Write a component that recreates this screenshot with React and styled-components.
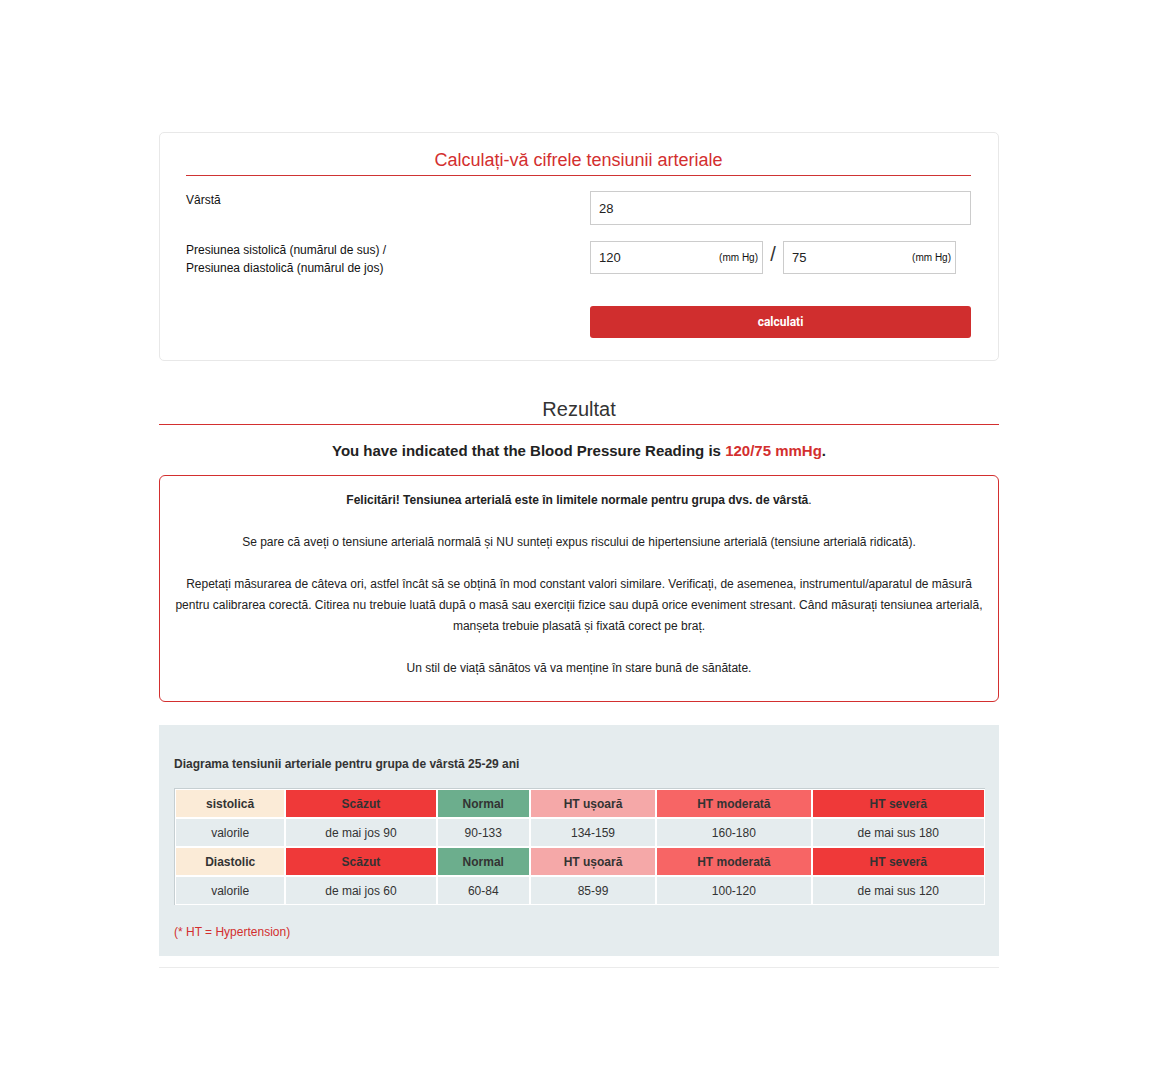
import React from "react";
import styled, { createGlobalStyle } from "styled-components";

const GlobalStyle = createGlobalStyle`
  body {
    margin: 0;
    background: #fff;
    font-family: "Liberation Sans", Arial, sans-serif;
    color: #333;
  }
`;

const Page = styled.div`
  padding: 132px 0 120px 4px;
`;

const Wrapper = styled.div`
  width: 840px;
  margin: 0 auto;
`;

const Card = styled.section`
  border: 1px solid #e8e8e8;
  border-radius: 5px;
  padding: 17px 27px 22px 26px;
`;

const CardTitle = styled.h2`
  margin: 0 0 15px;
  padding-bottom: 4px;
  border-bottom: 1px solid #cf3434;
  color: #d32f2f;
  font-size: 18px;
  font-weight: normal;
  line-height: 21px;
  text-align: center;
`;

const FormRow = styled.div`
  display: grid;
  grid-template-columns: 1fr 381px;
  align-items: start;
  margin-bottom: ${(p) => p.gap ?? 16}px;
`;

const Label = styled.label`
  font-size: 12px;
  line-height: 18px;
  color: #111;
`;

const TextInput = styled.div`
  box-sizing: border-box;
  height: ${(p) => p.h || 34}px;
  width: ${(p) => p.w || "100%"};
  border: 1px solid #cccccc;
  display: flex;
  align-items: center;
  justify-content: space-between;
  padding: 0 4px 0 8px;
  font-size: 13px;
  color: #222;
  background: #fff;
`;

const Unit = styled.span`
  font-size: 10px;
  color: #111;
`;

const PairRow = styled.div`
  display: flex;
  align-items: center;
`;

const Slash = styled.span`
  width: 20px;
  text-align: center;
  font-size: 20px;
  color: #333;
  margin-top: -6px;
`;

const Button = styled.button`
  width: 100%;
  height: 32px;
  border: none;
  border-radius: 3px;
  background: #d02e2e;
  color: #fff;
  font-family: Roboto, "Liberation Sans", sans-serif;
  font-weight: bold;
  font-size: 12px;
  cursor: pointer;
`;

const ResultTitle = styled.h2`
  margin: 36px 0 0;
  padding-bottom: 3px;
  border-bottom: 1px solid #d32f2f;
  text-align: center;
  font-size: 20px;
  font-weight: normal;
  line-height: 24px;
  color: #333;
`;

const Reading = styled.p`
  margin: 16px 0 14px;
  text-align: center;
  font-size: 15px;
  font-weight: bold;
  line-height: 20px;
  color: #222;
`;

const Red = styled.span`
  color: #d32f2f;
`;

const Alert = styled.div`
  border: 1px solid #d32f2f;
  border-radius: 6px;
  padding: 14px 15px 1px;
  text-align: center;
  font-size: 12px;
  line-height: 21px;
  color: #222;
`;

const Para = styled.p`
  margin: 0 0 21px;
`;

const Chart = styled.section`
  margin-top: 23px;
  background: #e5ecee;
  padding: 30px 15px 15px;
`;

const ChartTitle = styled.h3`
  margin: 0 0 15px;
  font-size: 12px;
  line-height: 18px;
  font-weight: bold;
  color: #333;
`;

const Table = styled.table`
  width: 811px;
  border-collapse: separate;
  border-spacing: 0;
  background: #fff;
  border-top: 1px solid #c6cfd2;
  border-left: 1px solid #c6cfd2;
  table-layout: fixed;
`;

const Cell = styled.td`
  border: 1px solid #fff;
  height: 29px;
  padding: 0 4px;
  box-sizing: border-box;
  text-align: center;
  font-size: 12px;
  font-weight: ${(p) => (p.head ? "bold" : "normal")};
  color: #333;
  background: ${(p) => p.bg || "#e5ecee"};
`;

const Note = styled.p`
  margin: 18px 0 0;
  font-size: 12px;
  line-height: 18px;
  color: #d32f2f;
`;

const Divider = styled.hr`
  margin: 11px 0 0;
  border: none;
  border-top: 1px solid #ebebeb;
`;

const widths = [110, 151, 93, 126, 155, 173];

const heads = [
  { bg: "#fbebd7" },
  { label: "Scăzut", bg: "#ef3939" },
  { label: "Normal", bg: "#6cae8d" },
  { label: "HT ușoară", bg: "#f5a8a8" },
  { label: "HT moderată", bg: "#f76565" },
  { label: "HT severă", bg: "#ef3939" },
];

const rows = [
  {
    name: "sistolică",
    values: ["de mai jos 90", "90-133", "134-159", "160-180", "de mai sus 180"],
  },
  {
    name: "Diastolic",
    values: ["de mai jos 60", "60-84", "85-99", "100-120", "de mai sus 120"],
  },
];

const App = () => {
  return (
    <Page>
      <GlobalStyle />
      <Wrapper>
        <Card>
          <CardTitle>Calculați-vă cifrele tensiunii arteriale</CardTitle>
          <FormRow>
            <Label>Vârstă</Label>
            <TextInput>28</TextInput>
          </FormRow>
          <FormRow gap={29}>
            <Label>
              Presiunea sistolică (numărul de sus) /
              <br />
              Presiunea diastolică (numărul de jos)
            </Label>
            <PairRow>
              <TextInput h={33} w="173px">
                120 <Unit>(mm Hg)</Unit>
              </TextInput>
              <Slash>/</Slash>
              <TextInput h={33} w="173px">
                75 <Unit>(mm Hg)</Unit>
              </TextInput>
            </PairRow>
          </FormRow>
          <FormRow gap={0}>
            <span />
            <Button>calculati</Button>
          </FormRow>
        </Card>

        <ResultTitle>Rezultat</ResultTitle>
        <Reading>
          You have indicated that the Blood Pressure Reading is{" "}
          <Red>120/75 mmHg</Red>.
        </Reading>

        <Alert>
          <Para>
            <b>
              Felicitări! Tensiunea arterială este în limitele normale pentru
              grupa dvs. de vârstă
            </b>
            .
          </Para>
          <Para>
            Se pare că aveți o tensiune arterială normală și NU sunteți expus
            riscului de hipertensiune arterială (tensiune arterială ridicată).
          </Para>
          <Para>
            Repetați măsurarea de câteva ori, astfel încât să se obțină în mod
            constant valori similare. Verificați, de asemenea,
            instrumentul/aparatul de măsură pentru calibrarea corectă. Citirea
            nu trebuie luată după o masă sau exerciții fizice sau după orice
            eveniment stresant. Când măsurați tensiunea arterială, manșeta
            trebuie plasată și fixată corect pe braț.
          </Para>
          <Para>Un stil de viață sănătos vă va menține în stare bună de sănătate.</Para>
        </Alert>

        <Chart>
          <ChartTitle>
            Diagrama tensiunii arteriale pentru grupa de vârstă 25-29 ani
          </ChartTitle>
          <Table>
            <colgroup>
              {widths.map((w, i) => (
                <col key={i} style={{ width: w }} />
              ))}
            </colgroup>
            <tbody>
              {rows.map((r) => (
                <React.Fragment key={r.name}>
                  <tr>
                    {heads.map((h, i) => (
                      <Cell head key={i} bg={h.bg}>
                        {i === 0 ? r.name : h.label}
                      </Cell>
                    ))}
                  </tr>
                  <tr>
                    <Cell>valorile</Cell>
                    {r.values.map((v) => (
                      <Cell key={v}>{v}</Cell>
                    ))}
                  </tr>
                </React.Fragment>
              ))}
            </tbody>
          </Table>
          <Note>(* HT = Hypertension)</Note>
        </Chart>
        <Divider />
      </Wrapper>
    </Page>
  );
};

export default App;
